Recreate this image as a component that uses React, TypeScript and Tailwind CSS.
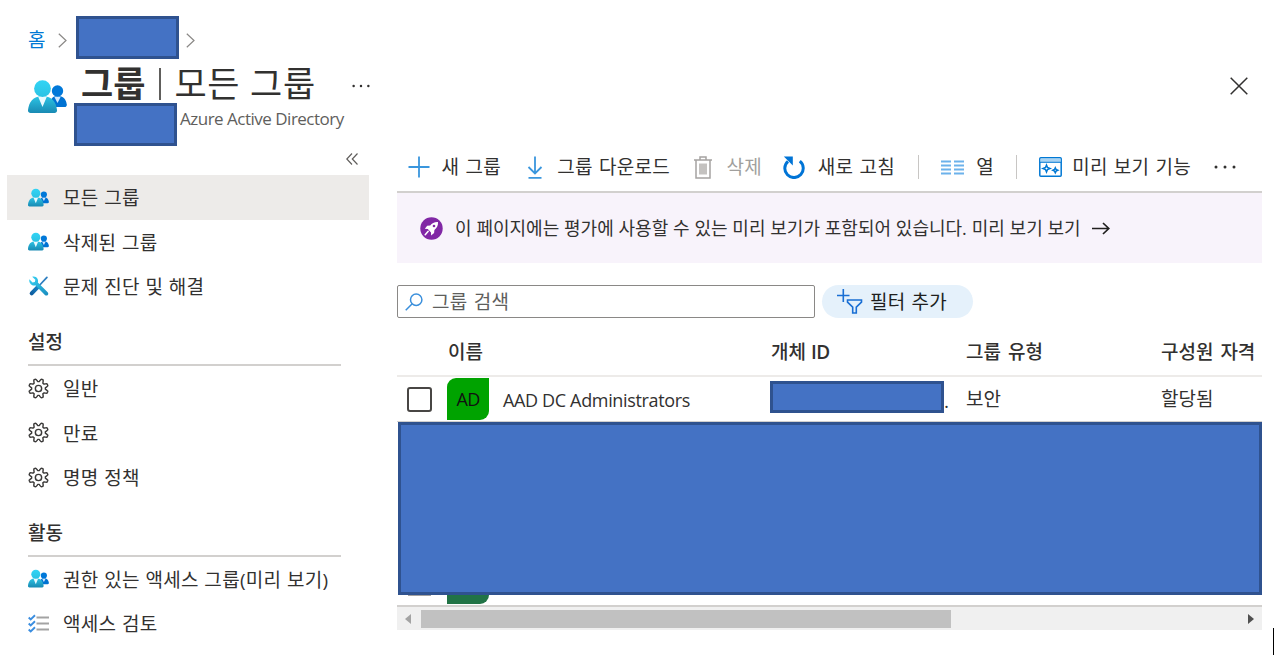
import React from 'react';
import clsx from 'clsx';

type IconProps = { className?: string };

const PeopleIcon = ({ className }: IconProps) => (
  <svg className={className} viewBox="0 0 39 33" fill="none">
    <defs>
      <linearGradient id="people-front" x1="15" y1="0" x2="15" y2="33" gradientUnits="userSpaceOnUse">
        <stop offset="0" stopColor="#32d4f5" />
        <stop offset="0.5" stopColor="#2cc3e4" />
        <stop offset="1" stopColor="#198ab3" />
      </linearGradient>
    </defs>
    <path d="M36.500 27c1.600 0 2.500-1.100 2.300-2.600C38 19.500 35.500 16 29.500 16c-5 0-7.500 3-8 11z" fill="#0072d2" />
    <path d="M26.500 17.200l3 5.800 3-5.800c-2-1.200-4-1.200-6 0z" fill="#cfe8ff" />
    <circle cx="29.500" cy="11" r="5.700" fill="#0078d9" />
    <path d="M26.500 33c1.700 0 2.800-1.300 2.500-3C28 22 24.500 16.200 14.500 16.200S1 22 0 30c-.2 1.700.8 3 2.500 3z" fill="url(#people-front)" />
    <path d="M10.300 17l4.200 10 4.200-10c-2.500-1.200-5.900-1.200-8.400 0z" fill="#eafaff" />
    <circle cx="14.500" cy="8.600" r="8.400" fill="url(#people-front)" />
  </svg>
);

const ToolsIcon = ({ className }: IconProps) => (
  <svg className={className} viewBox="0 0 20 20" fill="none">
    <defs>
      <linearGradient id="tools-blade" x1="10" y1="10" x2="2" y2="18" gradientUnits="userSpaceOnUse">
        <stop offset="0" stopColor="#1b86c8" />
        <stop offset="1" stopColor="#0c5799" />
      </linearGradient>
      <linearGradient id="tools-wrench" x1="3" y1="2" x2="18" y2="18" gradientUnits="userSpaceOnUse">
        <stop offset="0" stopColor="#35cdf0" />
        <stop offset="1" stopColor="#1b8fc0" />
      </linearGradient>
    </defs>
    <path d="M18 1.400L11 8.800" stroke="#2f7fc0" strokeWidth="1.700" strokeLinecap="round" />
    <path d="M9.500 10.300L3.500 16.600" stroke="url(#tools-blade)" strokeWidth="3.800" strokeLinecap="round" />
    <path d="M1.300 3.200l3 3 2.200-.5.500-2.200-3-2.700c2-.7 4 .1 5 1.800.7 1.200.7 2.400.4 3.600l9.300 9.200c.8.900.8 2 .1 2.700s-1.800.7-2.700-.1L7 8.900c-1.400.4-3 .2-4.300-1C1.400 6.600.9 4.900 1.300 3.200z" fill="url(#tools-wrench)" />
  </svg>
);

const gearPath = (() => {
  const pts: string[] = [];
  for (let i = 0; i <= 128; i++) {
    const a = (i / 128) * Math.PI * 2;
    const wave = Math.max(-1, Math.min(1, -1.4 * Math.cos(a * 8)));
    const r = 8.7 + 1.5 * wave;
    pts.push(`${(11 + r * Math.cos(a)).toFixed(2)} ${(11 + r * Math.sin(a)).toFixed(2)}`);
  }
  return `M${pts.join('L')}Z`;
})();

const GearIcon = ({ className }: IconProps) => (
  <svg className={className} viewBox="0 0 22 22" fill="none" stroke="#3b3a39" strokeWidth="1.500">
    <path d={gearPath} strokeLinejoin="round" />
    <circle cx="11" cy="11" r="3.300" />
  </svg>
);

const ChecklistIcon = ({ className }: IconProps) => (
  <svg className={className} viewBox="0 0 21 18" fill="none">
    <path d="M8.500 3H21M8.500 9H21M8.500 15H21" stroke="#a3a3a3" strokeWidth="1.900" />
    <path d="M.7 3l2 2L7 .8M.7 9l2 2L7 6.800M.7 15l2 2L7 12.800" stroke="#3b8ee0" strokeWidth="1.900" />
  </svg>
);

const Chevron = () => (
  <svg className="h-[15px] w-[9px]" viewBox="0 0 9 15" fill="none" stroke="#8a8886" strokeWidth="1.200">
    <path d="M.8.8L8 7.500.8 14.200" />
  </svg>
);

const RocketBadge = () => (
  <svg className="h-[23px] w-[23px]" viewBox="0 0 23 23" fill="none">
    <circle cx="11.500" cy="11.500" r="11.200" fill="#8127a5" />
    <path d="M18 5c-3.500-.2-6 1-7.800 3.400l-3 .3-2.400 3 3 .2L11 15.400l.1 3 3-2.500.3-3C17 11 18.200 8.500 18 5z" fill="#fff" />
    <circle cx="14" cy="9" r="1.300" fill="#8127a5" />
    <path d="M5.200 17.800l3-3.500" stroke="#fff" strokeWidth="1.500" strokeLinecap="round" />
  </svg>
);

const PlusIcon = () => (
  <svg className="h-[22px] w-[22px]" viewBox="0 0 22 22" stroke="#3a96dd" strokeWidth="1.800">
    <path d="M11 .5v21M.5 11h21" />
  </svg>
);

const DownloadIcon = () => (
  <svg className="h-[23px] w-[16px]" viewBox="0 0 16 23" fill="none" stroke="#3a96dd" strokeWidth="1.800">
    <path d="M8 .5v17M1.500 11L8 17.500l6.500-6.500M1.500 21.800h13" />
  </svg>
);

const TrashIcon = () => (
  <svg className="h-[23px] w-[18px]" viewBox="0 0 18 23" fill="none" stroke="#a5a3a1" strokeWidth="1.500">
    <path d="M0 4h18M6 3.500V1h6v2.500M2 4v18h14V4" />
    <path d="M5 7.500h8v11H5z" fill="#c4c2c0" stroke="none" />
  </svg>
);

const RefreshIcon = () => (
  <svg className="h-[23px] w-[22px]" viewBox="0 0 22 23" fill="none">
    <path d="M16.800 5.200A9.200 9.200 0 1 1 5 5.400" stroke="#0074d6" strokeWidth="3" />
    <path d="M.8.600h9v8.800z" fill="#0074d6" />
  </svg>
);

const ColumnsIcon = () => (
  <svg className="h-[15px] w-[23px]" viewBox="0 0 23 15" stroke="#6cb2eb" strokeWidth="2">
    <path d="M0 1.500h10M13 1.500h10M0 5.500h10M13 5.500h10M0 9.500h10M13 9.500h10M0 13.500h10M13 13.500h10" />
  </svg>
);

const PreviewIcon = () => (
  <svg className="h-[20px] w-[23px]" viewBox="0 0 23 20" fill="none" stroke="#0078d4">
    <rect x=".8" y=".8" width="21.400" height="18.400" rx="1" fill="#fff" strokeWidth="1.500" />
    <path d="M1.500 1.500h20v3.500h-20z" fill="#a9d3f2" stroke="none" />
    <path d="M1 5.300h21" strokeWidth="1" />
    <path d="M7.500 8l1 2.500 2.500 1-2.500 1-1 2.500-1-2.500-2.500-1 2.500-1z" strokeWidth="1.500" />
    <path d="M16.300 10.800l.8 1.700 1.700.8-1.700.8-.8 1.700-.8-1.700-1.700-.8 1.700-.8z" strokeWidth="1.500" />
  </svg>
);

const SearchIcon = () => (
  <svg className="h-[18px] w-[18px]" viewBox="0 0 18 18" fill="none" stroke="#3a8fdc" strokeWidth="1.500">
    <circle cx="11.200" cy="6.800" r="5.700" />
    <path d="M7.200 10.800L.7 17.300" />
  </svg>
);

const AddFilterIcon = () => (
  <svg className="h-[25px] w-[26px]" viewBox="0 0 26 25" fill="none" stroke="#1a6fd4" strokeWidth="1.600">
    <path d="M6.300 0v13M0 6.500h12.500" />
    <path d="M10.500 11h14v2.200l-5.200 5V24h-3.600v-5.800l-5.200-5z" />
  </svg>
);

const Dots = ({ className }: IconProps) => (
  <svg className={className} viewBox="0 0 22 4" fill="#323130">
    <circle cx="2" cy="2" r="1.500" />
    <circle cx="11" cy="2" r="1.500" />
    <circle cx="20" cy="2" r="1.500" />
  </svg>
);

// Solid block covering tenant specific data
const Redacted = ({ className }: IconProps) => (
  <div className={clsx('border-[3px] border-[#2f528f] bg-[#4472c4]', className)} />
);

const mainItems = [
  { label: '모든 그룹', icon: PeopleIcon, active: true },
  { label: '삭제된 그룹', icon: PeopleIcon },
  { label: '문제 진단 및 해결', icon: ToolsIcon },
];

const settingItems = [
  { label: '일반', icon: GearIcon },
  { label: '만료', icon: GearIcon },
  { label: '명명 정책', icon: GearIcon },
];

const activityItems = [
  { label: '권한 있는 액세스 그룹(미리 보기)', icon: PeopleIcon },
  { label: '액세스 검토', icon: ChecklistIcon },
];

type Item = { label: string; icon: React.ComponentType<IconProps>; active?: boolean };

const NavList = ({ items }: { items: Item[] }) => (
  <ul>
    {items.map(({ label, icon: Icon, active }) => (
      <li
        key={label}
        className={clsx('flex h-[44.6px] items-center pl-[21px]', active && 'bg-[#edebe9]')}
      >
        <Icon className="h-[21px] w-[21px] shrink-0" />
        <span className="ml-[14px] pt-[2px] tracking-[0.3px] whitespace-nowrap [word-spacing:0.4px]">{label}</span>
      </li>
    ))}
  </ul>
);

const NavHeading = ({ children }: { children: React.ReactNode }) => (
  <h2 className="ml-[21px] flex h-[57px] w-[313px] items-center border-b-2 border-[#d2d0ce] pt-[11px] font-medium">
    {children}
  </h2>
);

const ToolButton = ({ icon, label, className }: { icon: React.ReactNode; label: string; className: string }) => (
  <button className={clsx('flex shrink-0 items-center justify-between whitespace-nowrap', className)}>
    {icon}
    <span className="tracking-[0.3px] [word-spacing:0.8px]">{label}</span>
  </button>
);

export default function App() {
  return (
    <div className="relative h-[655px] w-[1275px] overflow-hidden bg-white font-['Open_Sans','Noto_Sans_CJK_KR',sans-serif] text-[19px] leading-6 text-[#323130]">
      {/* Breadcrumb */}
      <nav className="flex h-[59px] items-center pl-[28px] pt-[16px]">
        <span className="w-[30px] pt-[4px] text-[#0078d4]">홈</span>
        <div className="pt-[5px]">
          <Chevron />
        </div>
        <Redacted className="ml-[9px] h-[43px] w-[103px]" />
        <div className="ml-[7px] pt-[5px]">
          <Chevron />
        </div>
      </nav>

      {/* Blade title */}
      <header className="flex h-[86px] pl-[28px]">
        <PeopleIcon className="mt-[21px] h-[33px] w-[39px]" />
        <div className="ml-[7px] w-[272px]">
          <h1 className="flex h-[44px] items-center pl-[7px] pt-[5px] text-[35px] leading-[44px] whitespace-nowrap">
            <span className="font-bold">그룹</span>
            <span className="ml-[14px] h-[32px] w-[2px] bg-[#605e5c]" />
            <span className="ml-[13px] tracking-[0.7px]">모든 그룹</span>
          </h1>
          <div className="flex">
            <Redacted className="h-[43px] w-[103px]" />
            <span className="ml-[3px] mt-[4px] text-[17px] whitespace-nowrap text-[#605e5c] tracking-[-0.5px]">Azure Active Directory</span>
          </div>
        </div>
        <Dots className="ml-[6px] mt-[25px] h-[4px] w-[18px]" />
        <svg className="ml-[860px] mt-[18px] h-[18px] w-[18px]" viewBox="0 0 18 18" stroke="#323130" strokeWidth="1.500">
          <path d="M.7.700l16.600 16.600M17.300.700L.7 17.300" />
        </svg>
      </header>

      <div className="flex">
        {/* Sidebar */}
        <aside className="ml-[7px] w-[362px] shrink-0">
          <div className="flex h-[30px] justify-end pr-[11px] pt-[8px]">
            <svg className="h-[12px] w-[12px]" viewBox="0 0 12 12" fill="none" stroke="#605e5c" strokeWidth="1.200">
              <path d="M6 .5L.8 6 6 11.500M11.500.5L6.300 6l5.200 5.500" />
            </svg>
          </div>
          <NavList items={mainItems} />
          <NavHeading>설정</NavHeading>
          <NavList items={settingItems} />
          <NavHeading>활동</NavHeading>
          <NavList items={activityItems} />
        </aside>

        <main className="ml-[28px] w-[865px] shrink-0">
          {/* Command bar */}
          <div className="flex h-[48px] items-center border-b-2 border-[#d2d0ce] pb-[2px] pl-[11px]">
            <ToolButton className="w-[93px]" icon={<PlusIcon />} label="새 그룹" />
            <ToolButton className="ml-[26px] w-[143px]" icon={<DownloadIcon />} label="그룹 다운로드" />
            <ToolButton className="ml-[24px] w-[68px] text-[#a19f9d]" icon={<TrashIcon />} label="삭제" />
            <ToolButton className="ml-[21px] w-[112px]" icon={<RefreshIcon />} label="새로 고침" />
            <span className="ml-[23px] h-[24px] w-px bg-[#c8c6c4]" />
            <ToolButton className="ml-[22px] w-[53px]" icon={<ColumnsIcon />} label="열" />
            <span className="ml-[22px] h-[24px] w-px bg-[#c8c6c4]" />
            <ToolButton className="ml-[22px] w-[152px]" icon={<PreviewIcon />} label="미리 보기 기능" />
            <Dots className="ml-[23px] h-[4px] w-[22px]" />
          </div>

          {/* Preview banner */}
          <div className="flex h-[70px] items-center bg-[#f8f3fb] pl-[23px] text-[18px]">
            <RocketBadge />
            <span className="ml-[12px] w-[628px] whitespace-nowrap [word-spacing:0.15px]">
              이 페이지에는 평가에 사용할 수 있는 미리 보기가 포함되어 있습니다. 미리 보기 보기
            </span>
            <svg className="ml-[9px] h-[13px] w-[18px]" viewBox="0 0 18 13" fill="none" stroke="#201f1e" strokeWidth="1.700">
              <path d="M0 6.500h16.500M11 1l5.800 5.500L11 12" />
            </svg>
          </div>

          {/* Search and filter */}
          <div className="mt-[22px] flex h-[33px]">
            <div className="flex w-[418px] items-center rounded-[2px] border-[1.500px] border-[#8a8886] pl-[7px] text-[#605e5c]">
              <SearchIcon />
              <span className="ml-[9px] tracking-[0.3px] [word-spacing:1px]">그룹 검색</span>
            </div>
            <button className="ml-[7px] flex w-[151px] items-center rounded-full bg-[#e5f1fb] pl-[15px] text-[#201f1e]">
              <AddFilterIcon />
              <span className="ml-[7px] whitespace-nowrap tracking-[0.2px] [word-spacing:1px]">필터 추가</span>
            </button>
          </div>

          {/* Groups table */}
          <div className="grid h-[59px] grid-cols-[51px_323px_195px_195px_101px] items-center border-b-2 border-[#edebe9] pt-[11px] font-medium whitespace-nowrap">
            <span />
            <span>이름</span>
            <span>개체 <span className="font-semibold tracking-[-0.5px]">ID</span></span>
            <span className="[word-spacing:2px]">그룹 유형</span>
            <span className="[word-spacing:2px]">구성원 자격</span>
          </div>
          <div className="grid h-[45px] grid-cols-[50px_323px_196px_195px_101px] items-center border-b border-[#d2d0ce]">
            <span className="ml-[10px] h-[25px] w-[25px] rounded-[3px] border-2 border-[#484644]" />
            <div className="flex items-center">
              <span className="flex h-[42px] w-[42px] items-center justify-center rounded-tl-[9px] rounded-br-[9px] bg-[#00a300] text-[18px] text-[#111] tracking-[-0.6px]">AD</span>
              <span className="ml-[14px] mt-[2px] text-[18px] whitespace-nowrap tracking-[-0.35px]">AAD DC Administrators</span>
            </div>
            <div className="flex h-[32px] items-end self-start mt-[4px]">
              <Redacted className="h-[32px] w-[174px]" />
              <span>.</span>
            </div>
            <span>보안</span>
            <span>할당됨</span>
          </div>
          <div className="h-[183px]">
            <Redacted className="ml-px h-[173px]" />
            <div className="flex h-[10px] items-start">
              <span className="ml-[11px] h-px w-[23px] bg-[#a3a1a0]" />
              <span className="ml-[16px] h-[9px] w-[42px] rounded-br-[9px] bg-[#217346]" />
            </div>
          </div>

          {/* Horizontal scrollbar */}
          <div className="flex h-[25px] items-center border-t-2 border-[#d2d0ce] bg-[#f0f0f0] pl-[8px] pr-[8px]">
            <span className="border-y-[5px] border-r-[6px] border-y-transparent border-r-[#a3a3a3]" />
            <span className="ml-[10px] h-[18px] w-[530px] bg-[#c1c1c1]" />
            <span className="ml-auto border-y-[5px] border-l-[6px] border-y-transparent border-l-[#505050]" />
          </div>
        </main>
      </div>

      {/* Text caret */}
      <span className="absolute right-[1px] bottom-0 h-[27px] w-px bg-black" />
    </div>
  );
}
